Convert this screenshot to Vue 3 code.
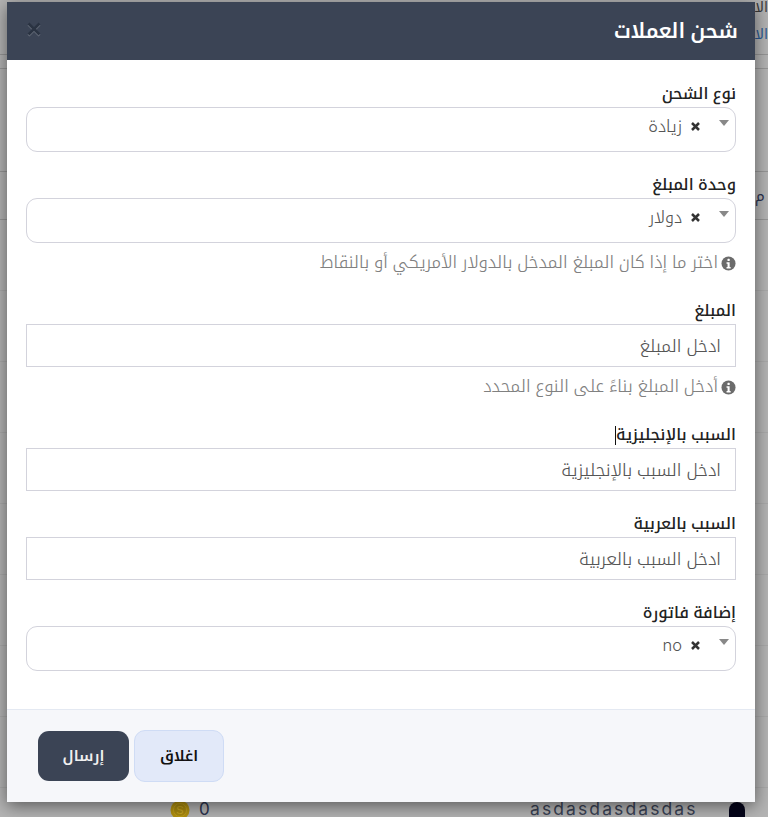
<script setup>
const rows = [
  { h: 55, cls: '' }, { h: 14, cls: '' }, { h: 103, cls: '' }, { h: 48, cls: '' },
  { h: 71, cls: 'faint' }, { h: 71, cls: 'faint' }, { h: 71, cls: 'faint' }, { h: 71, cls: 'faint' },
  { h: 71, cls: 'faint' }, { h: 71, cls: 'faint' }, { h: 71, cls: 'faint' }, { h: 71, cls: 'faint' }
]
const fields = [
  { label: 'نوع الشحن', type: 'select', value: 'زيادة' },
  { label: 'وحدة المبلغ', type: 'select', value: 'دولار', help: 'اختر ما إذا كان المبلغ المدخل بالدولار الأمريكي أو بالنقاط' },
  { label: 'المبلغ', type: 'input', placeholder: 'ادخل المبلغ', help: 'أدخل المبلغ بناءً على النوع المحدد' },
  { label: 'السبب بالإنجليزية', type: 'input', placeholder: 'ادخل السبب بالإنجليزية', caret: true },
  { label: 'السبب بالعربية', type: 'input', placeholder: 'ادخل السبب بالعربية' },
  { label: 'إضافة فاتورة', type: 'select', value: 'no' }
]
</script>

<template>
  <div class="page">
    <div class="backdrop-rows">
      <div v-for="(r, i) in rows" :key="i" class="row" :class="r.cls" :style="{ height: r.h + 'px' }"></div>
    </div>
    <div class="top-text">
      <span>الا</span>
      <a>الا</a>
    </div>
    <div class="glimpse">
      <svg class="coin" width="20" height="20" viewBox="0 0 20 20">
        <circle cx="10" cy="10" r="9.5" fill="#b3920f" />
        <circle cx="10" cy="10" r="6.5" fill="#a98a10" stroke="#c2a01a" stroke-width="1" />
        <text x="10" y="14" text-anchor="middle" class="coin-s">S</text>
      </svg>
      <span class="zero">0</span>
      <span class="user">asdasdasdasdas</span>
      <span class="avatar"></span>
    </div>
    <span class="side-letter">م</span>

    <section class="modal" dir="rtl">
      <header class="modal-head">
        <h2>شحن العملات</h2>
        <svg class="close" width="16" height="16" viewBox="0 0 16 16">
          <path d="M2.5 2.5 13.5 13.5M13.5 2.5 2.5 13.5" />
        </svg>
      </header>
      <form class="modal-body" @submit.prevent>
        <div v-for="f in fields" :key="f.label" class="field">
          <label>
            <span class="label-text">{{ f.label }}<i v-if="f.caret" class="caret"></i></span>
          </label>
          <div v-if="f.type === 'select'" class="select">
            <svg class="tag-x" width="11" height="11" viewBox="0 0 11 11">
              <path d="M2 2 9 9M9 2 2 9" />
            </svg>
            <span class="tag-text">{{ f.value }}</span>
            <span class="arrow"></span>
          </div>
          <input v-else class="text-input" :placeholder="f.placeholder" />
          <div v-if="f.help" class="help">
            <svg class="info" width="15" height="15" viewBox="0 0 16 16">
              <circle cx="8" cy="8" r="7.5" fill="#6b6b6b" />
              <rect x="6.9" y="3" width="2.4" height="2.4" rx=".6" fill="#fff" />
              <path d="M5.9 6.6h3.3v5h1.1v1.6H5.9v-1.6h1.1V8.2H5.9z" fill="#fff" />
            </svg>
            <span>{{ f.help }}</span>
          </div>
        </div>
      </form>
      <footer class="modal-foot">
        <button type="button" class="btn-close">اغلاق</button>
        <button type="button" class="btn-send">إرسال</button>
      </footer>
    </section>
  </div>
</template>

<style>
html, body { margin: 0; padding: 0; background: #b4b4b4; }
</style>

<style scoped>
.page {
  position: relative;
  width: 768px;
  height: 817px;
  overflow: hidden;
  background: #b4b4b4;
  font-family: "Inter", "Noto Kufi Arabic", "DejaVu Sans", sans-serif;
}
.backdrop-rows { display: flex; flex-direction: column; }
.top-text {
  position: absolute;
  top: 0;
  right: 0;
  display: flex;
  flex-direction: column;
  gap: 13px;
  align-items: flex-end;
  font-size: 14px;
  line-height: 14px;
  color: #3a3a3a;
}
.top-text a { color: #2a5a94; }
.row { border-bottom: 1px solid rgba(0, 0, 0, .16); box-sizing: border-box; }
.row.faint { border-bottom-color: rgba(0, 0, 0, .05); }
.glimpse { position: absolute; inset: 0; pointer-events: none; }
.coin { position: absolute; left: 170px; top: 800px; }
.coin-s { font: 11px "Liberation Sans", sans-serif; fill: #c9a824; }
.zero {
  position: absolute;
  left: 199px;
  top: 801px;
  font: 17px/16px "Inter", sans-serif;
  color: #2b3350;
}
.user {
  position: absolute;
  left: 530px;
  top: 801px;
  font: 17.5px/16px "Inter", sans-serif;
  letter-spacing: 2.1px;
  color: #3a4254;
}
.avatar {
  position: absolute;
  left: 729px;
  top: 802px;
  width: 16px;
  height: 20px;
  border-radius: 8px 8px 0 0;
  background: #04041a;
}
.side-letter {
  position: absolute;
  left: 755px;
  top: 186px;
  font-size: 15px;
  line-height: 20px;
  color: #2b3350;
}

.modal {
  position: absolute;
  left: 7px;
  top: 2px;
  width: 748px;
  height: 800px;
  display: flex;
  flex-direction: column;
  background: #fff;
  box-shadow: 0 4px 16px rgba(0, 0, 0, .5);
}
.modal-head {
  height: 58px;
  flex: none;
  display: flex;
  align-items: center;
  justify-content: space-between;
  padding: 0 17px 0 19px;
  background: #3b4455;
}
.modal-head h2 {
  margin: 0;
  font-size: 20.5px;
  font-weight: 600;
  color: #fff;
}
.close { margin-bottom: 5px; filter: drop-shadow(0 1px 0 rgba(255, 255, 255, .25)); }
.close path { stroke: #2a3342; stroke-width: 2.6; fill: none; }
.modal-body { flex: 1; padding: 21px 19px 0; }
.field { margin-bottom: 20px; }
label { display: block; height: 26px; line-height: 24px; font-size: 16px; font-weight: 500; color: #222; }
.label-text { position: relative; }
.caret {
  position: absolute;
  left: -1px;
  top: 2px;
  width: 1px;
  height: 19px;
  background: #111;
}
.select {
  position: relative;
  box-sizing: border-box;
  height: 45px;
  border: 1px solid #d3d3dc;
  border-radius: 11px;
  display: flex;
  align-items: flex-start;
  padding: 5px 34px 0 0;
  gap: 8px;
  font-size: 16.5px;
  font-weight: 300;
  line-height: 26px;
  color: #555;
}
.tag-x { flex: none; margin-top: 8px; }
.tag-x path { stroke: #333; stroke-width: 2.5; fill: none; }
.arrow {
  position: absolute;
  right: 6px;
  top: 12px;
  border-style: solid;
  border-width: 6px 5.5px 0;
  border-color: #888 transparent transparent;
}
.text-input {
  display: block;
  box-sizing: border-box;
  width: 100%;
  height: 43px;
  padding: 0 14px;
  border: 1px solid #d3d3dc;
  border-radius: 0;
  outline: none;
  background: #fff;
  font: 300 17.4px "Inter", "Noto Kufi Arabic", sans-serif;
  color: #444;
}
.text-input::placeholder { color: #555; opacity: 1; }
.help {
  height: 35px;
  box-sizing: border-box;
  padding-top: 7px;
  display: flex;
  align-items: flex-start;
  gap: 3px;
  font-size: 17.2px;
  font-weight: 300;
  line-height: 24px;
  color: #808080;
}
.info { margin-top: 6px; flex: none; }
.modal-foot {
  flex: none;
  box-sizing: border-box;
  height: 93px;
  display: flex;
  align-items: center;
  gap: 5px;
  padding: 0 31px 0;
  border-top: 1px solid #e4e9f2;
  background: #f6f7fa;
}
.btn-close, .btn-send {
  font-family: inherit;
  font-size: 15px;
  font-weight: 600;
  cursor: pointer;
}
.btn-close {
  margin-inline-start: auto;
  width: 90px;
  height: 52px;
  border: 1px solid #cfdcf5;
  border-radius: 11px;
  background: #e2e9f9;
  color: #111;
}
.btn-send {
  width: 91px;
  height: 50px;
  border: 0;
  border-radius: 11px;
  background: #3b4455;
  color: #f0f0f0;
}
</style>
